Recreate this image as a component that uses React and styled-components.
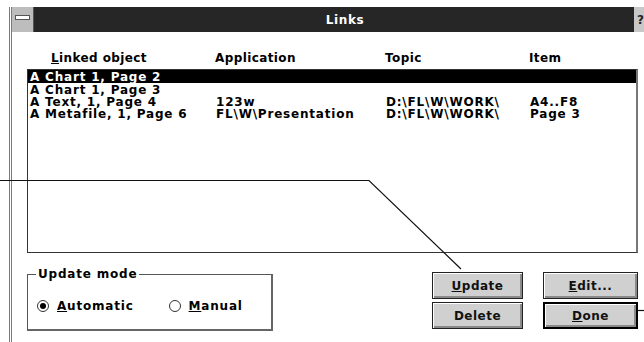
import React from "react";
import styled, { createGlobalStyle } from "styled-components";

const Global = createGlobalStyle`
  html, body { margin: 0; padding: 0; background: #fff; }
  body { font-family: "DejaVu Sans", "Liberation Sans", Arial, sans-serif; }
`;

const Page = styled.div`
  position: relative;
  width: 644px;
  height: 342px;
  overflow: hidden;
  background: #fff;
  padding-top: 7px;
  box-sizing: border-box;
`;

const Window = styled.div`
  margin-left: 9px;
  width: 645px;
  height: 335px;
  border-left: 3px double #7a7a7a;
  box-sizing: border-box;
  display: flex;
  flex-direction: column;
`;

const TitleBar = styled.div`
  height: 25px;
  background: #262626;
  display: flex;
  align-items: stretch;
`;

const SysBox = styled.div`
  width: 21px;
  background: #bdbdbd;
  border-right: 1px solid #555;
  display: flex;
  align-items: center;
  justify-content: center;
  &::after {
    content: "";
    width: 13px;
    height: 3px;
    background: #fff;
    border: 1px solid #555;
    margin-top: -4px;
  }
`;

const Title = styled.div`
  flex: 1;
  color: #fff;
  font-weight: bold;
  font-size: 12px;
  letter-spacing: 0.6px;
  display: flex;
  align-items: center;
  justify-content: center;
  padding-left: 22px;
`;

const HelpBox = styled.div`
  width: 20px;
  background: #c8c8c8;
  color: #222;
  font-weight: bold;
  font-size: 12px;
  display: flex;
  align-items: center;
  padding-left: 3px;
  box-sizing: border-box;
`;

const Body = styled.div`
  padding: 18px 0 0 15px;
  width: 611px;
  box-sizing: content-box;
  display: flex;
  flex-direction: column;
`;

const Cols = styled.div`
  display: grid;
  grid-template-columns: 187px 170px 144px 1fr;
  padding-left: 1px;
  font-size: 12px;
  font-weight: bold;
  letter-spacing: 0.8px;
`;

const HeaderRow = styled(Cols)`
  height: 16px;
  line-height: 16px;
  margin-bottom: 3px;
  letter-spacing: 0.4px;
  & > span:first-child { padding-left: 23px; }
`;

const ListBox = styled.div`
  height: 184px;
  border: 1px solid #333;
  border-right: 2px solid #777;
  box-sizing: border-box;
  display: flex;
  flex-direction: column;
`;

const Row = styled(Cols)`
  height: ${p => (p.$selected ? "13px" : "12px")};
  line-height: ${p => (p.$selected ? "15px" : "14px")};
  background: ${p => (p.$selected ? "#000" : "transparent")};
  color: ${p => (p.$selected ? "#fff" : "#000")};
  white-space: nowrap;
  & > span:first-child { padding-left: 1px; }
`;

const BottomRow = styled.div`
  margin-top: 19px;
  display: flex;
  justify-content: space-between;
  align-items: flex-start;
`;

const Group = styled.fieldset`
  margin: 0;
  margin-top: -5px;
  width: 246px;
  height: 64px;
  box-sizing: border-box;
  border: 1px solid #555;
  border-right: 2px solid #666;
  border-bottom: 2px solid #666;
  padding: 0 0 0 9px;
  display: flex;
  align-items: center;
  gap: 35px;
`;

const Legend = styled.legend`
  font-size: 12px;
  font-weight: bold;
  letter-spacing: 0.8px;
  padding: 0 2px;
  margin-left: -1px;
`;

const Radio = styled.label`
  display: flex;
  align-items: center;
  gap: 8px;
  font-size: 12px;
  font-weight: bold;
  letter-spacing: 0.8px;
  margin-top: 2px;
`;

const RadioDot = styled.span`
  width: 12px;
  height: 12px;
  border-radius: 50%;
  border: 1px solid #333;
  box-sizing: border-box;
  display: flex;
  align-items: center;
  justify-content: center;
  &::after {
    content: "";
    width: 6px;
    height: 6px;
    border-radius: 50%;
    background: ${p => (p.$on ? "#000" : "transparent")};
  }
`;

const Buttons = styled.div`
  display: grid;
  grid-template-columns: 91px 95px;
  grid-auto-rows: 27px;
  column-gap: 20px;
  row-gap: 3px;
`;

const Button = styled.div`
  box-sizing: border-box;
  border: ${p => (p.$default ? "2px solid #000" : "1px solid #222")};
  background: #d0d0d0;
  box-shadow: inset 1px 1px 0 #fff, inset -2px -2px 0 #8a8a8a;
  font-size: 12px;
  font-weight: bold;
  letter-spacing: 0.5px;
  display: flex;
  align-items: center;
  justify-content: center;
  color: #111;
`;

const U = styled.span`
  text-decoration: underline;
`;

const Overlay = styled.svg`
  position: absolute;
  left: 0;
  top: 0;
  pointer-events: none;
`;

const rows = [
  ["A Chart 1, Page 2", "", "", ""],
  ["A Chart 1, Page 3", "", "", ""],
  ["A Text, 1, Page 4", "123w", "D:\\FL\\W\\WORK\\", "A4..F8"],
  ["A Metafile, 1, Page 6", "FL\\W\\Presentation", "D:\\FL\\W\\WORK\\", "Page 3"],
];

export default function App() {
  return (
    <>
      <Global />
      <Page>
        <Window>
          <TitleBar>
            <SysBox />
            <Title>Links</Title>
            <HelpBox>?</HelpBox>
          </TitleBar>
          <Body>
            <HeaderRow>
              <span><U>L</U>inked object</span>
              <span>Application</span>
              <span>Topic</span>
              <span>Item</span>
            </HeaderRow>
            <ListBox>
              {rows.map((r, i) => (
                <Row key={i} $selected={i === 0}>
                  {r.map((c, j) => (
                    <span key={j}>{c}</span>
                  ))}
                </Row>
              ))}
            </ListBox>
            <BottomRow>
              <Group>
                <Legend>Update mode</Legend>
                <Radio>
                  <RadioDot $on />
                  <span><U>A</U>utomatic</span>
                </Radio>
                <Radio>
                  <RadioDot />
                  <span><U>M</U>anual</span>
                </Radio>
              </Group>
              <Buttons>
                <Button><span><U>U</U>pdate</span></Button>
                <Button><span><U>E</U>dit...</span></Button>
                <Button>Delete</Button>
                <Button $default><span><U>D</U>one</span></Button>
              </Buttons>
            </BottomRow>
          </Body>
        </Window>
        <Overlay width="644" height="342" viewBox="0 0 644 342">
          <polyline points="0,180.5 369,180.5 461,269" fill="none" stroke="#111" strokeWidth="1.2" />
          <line x1="638" y1="310.5" x2="644" y2="310.5" stroke="#111" strokeWidth="1.2" />
        </Overlay>
      </Page>
    </>
  );
}
